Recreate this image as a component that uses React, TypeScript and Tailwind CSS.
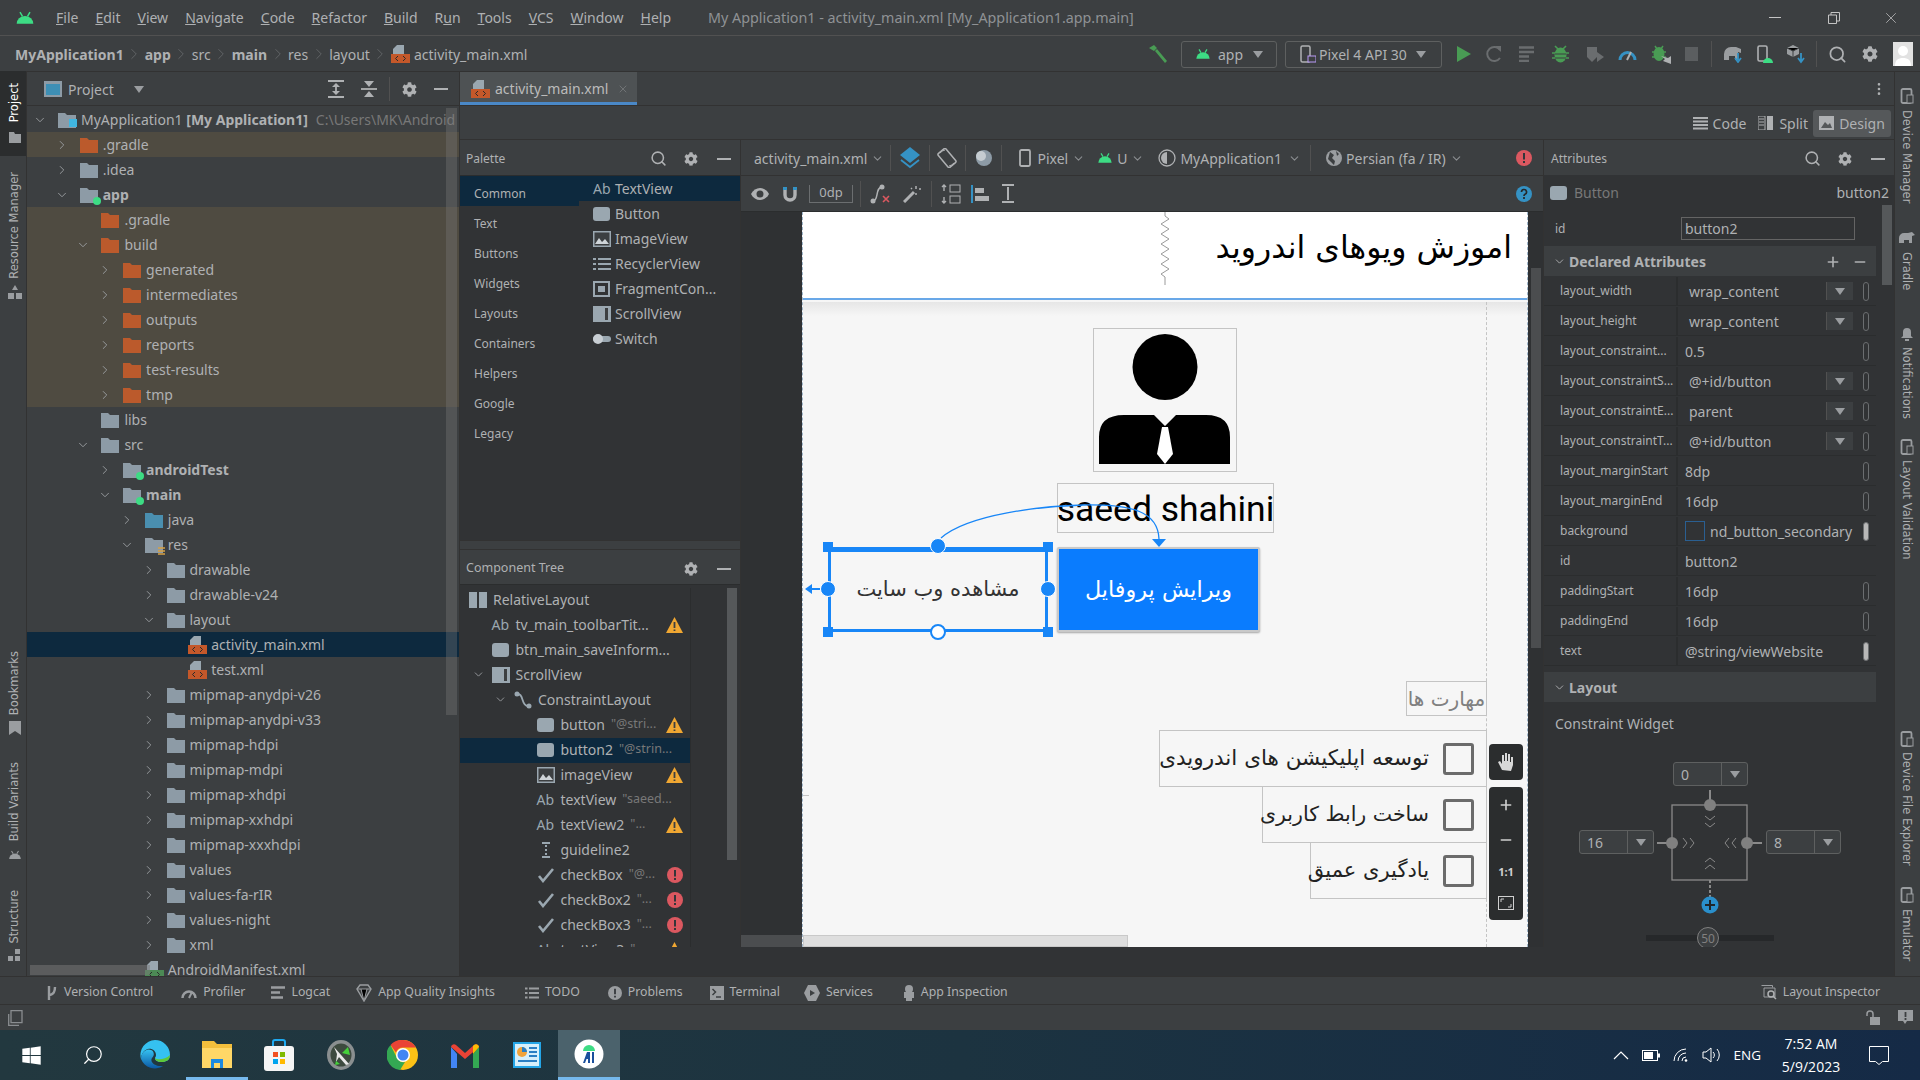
import { ChevronDown, ChevronRight, Minus, MoreVertical, Plus, Search, X } from 'lucide-react'
import type { ReactElement } from 'react'
import { FaCog, FaWindows } from 'react-icons/fa'

const Android = ({ c = '#3ddc84', s = 18 }: { c?: string; s?: number }) => (
  <svg width={s} height={s} viewBox="0 0 24 24">
    <path d="M2 19a10 9.5 0 0 1 20 0z" fill={c} />
    <path d="M6 5l3 5M18 5l-3 5" stroke={c} strokeWidth="1.8" />
  </svg>
)
const Folder = ({ c = '#8d9ba6' }: { c?: string }) => (
  <svg width="18" height="16" viewBox="0 0 18 16" className="shrink-0">
    <path d="M0 1h7l2 2h9v13H0z" fill={c} />
  </svg>
)
const XmlFile = ({ bar = '#c4582a' }: { bar?: string }) => (
  <svg width="19" height="18" viewBox="0 0 19 18" className="shrink-0">
    <path d="M6 0h7v9H2V4z" fill="#9aa7b0" />
    <rect x="0" y="9" width="19" height="9" fill={bar} />
    <path d="M7 11l-2.500 2.500L7 16M12 11l2.500 2.500L12 16" stroke="#2b2b2b" strokeWidth="1" fill="none" />
  </svg>
)
const Tri = ({ c = '#9a9da0', s = 10 }: { c?: string; s?: number }) => (
  <svg width={s} height={s * 0.7} viewBox="0 0 10 7" className="shrink-0">
    <path d="M0 0h10L5 7z" fill={c} />
  </svg>
)
const Warn = () => (
  <svg width="17" height="16" viewBox="0 0 17 16" className="shrink-0">
    <path d="M8.500 0L17 16H0z" fill="#f0a732" />
    <path d="M8.500 5v6M8.500 12.500v1.500" stroke="#3c3f41" strokeWidth="1.800" />
  </svg>
)
const Err = ({ c = '#db5860', s = 16 }: { c?: string; s?: number }) => (
  <svg width={s} height={s} viewBox="0 0 16 16" className="shrink-0">
    <circle cx="8" cy="8" r="8" fill={c} />
    <path d="M8 3v6.500M8 11v2" stroke="#33363a" strokeWidth="2" />
  </svg>
)
const Help = () => (
  <svg width="16" height="16" viewBox="0 0 16 16" className="shrink-0">
    <circle cx="8" cy="8" r="8" fill="#3592c4" />
    <path d="M5.500 6a2.500 2.500 0 1 1 3.500 2.300C8.300 8.700 8 9 8 10M8 11v2" stroke="#25282a" strokeWidth="1.700" fill="none" />
  </svg>
)
const BtnIcon = () => <span className="block h-[14px] w-[17px] shrink-0 rounded-[3px] bg-[#9aa7b0]" />
const Pic = () => (
  <svg width="18" height="16" viewBox="0 0 18 16" className="shrink-0">
    <rect width="18" height="16" fill="#9aa7b0" />
    <rect x="1.500" y="1.500" width="15" height="13" fill="#3c3f41" />
    <path d="M2 13l4-6 3 4 3-3 4 5z" fill="#cfd4d8" />
  </svg>
)
const Ab = () => <span className="w-[19px] shrink-0 text-[14px] text-[#9aa7b0]">Ab</span>
const Gear = () => <FaCog size={14} color="#afb1b3" className="shrink-0" />
const Dash = () => <span className="block h-[2px] w-[14px] shrink-0 bg-[#afb1b3]" />

type Node = { n: string; d: number; o?: boolean; c?: boolean; x?: boolean; b?: boolean; k?: string; dot?: boolean; sel?: boolean }

const tree: Node[] = [
  { n: '.gradle', d: 1, c: true, x: true, k: 'orange' },
  { n: '.idea', d: 1, c: true },
  { n: 'app', d: 1, o: true, b: true, dot: true },
  { n: '.gradle', d: 2, x: true, k: 'orange' },
  { n: 'build', d: 2, o: true, x: true, k: 'orange' },
  { n: 'generated', d: 3, c: true, x: true, k: 'orange' },
  { n: 'intermediates', d: 3, c: true, x: true, k: 'orange' },
  { n: 'outputs', d: 3, c: true, x: true, k: 'orange' },
  { n: 'reports', d: 3, c: true, x: true, k: 'orange' },
  { n: 'test-results', d: 3, c: true, x: true, k: 'orange' },
  { n: 'tmp', d: 3, c: true, x: true, k: 'orange' },
  { n: 'libs', d: 2 },
  { n: 'src', d: 2, o: true },
  { n: 'androidTest', d: 3, c: true, b: true, dot: true },
  { n: 'main', d: 3, o: true, b: true, dot: true },
  { n: 'java', d: 4, c: true, k: 'blue' },
  { n: 'res', d: 4, o: true, k: 'res' },
  { n: 'drawable', d: 5, c: true },
  { n: 'drawable-v24', d: 5, c: true },
  { n: 'layout', d: 5, o: true },
  { n: 'activity_main.xml', d: 6, k: 'xml', sel: true },
  { n: 'test.xml', d: 6, k: 'xml' },
  { n: 'mipmap-anydpi-v26', d: 5, c: true },
  { n: 'mipmap-anydpi-v33', d: 5, c: true },
  { n: 'mipmap-hdpi', d: 5, c: true },
  { n: 'mipmap-mdpi', d: 5, c: true },
  { n: 'mipmap-xhdpi', d: 5, c: true },
  { n: 'mipmap-xxhdpi', d: 5, c: true },
  { n: 'mipmap-xxxhdpi', d: 5, c: true },
  { n: 'values', d: 5, c: true },
  { n: 'values-fa-rIR', d: 5, c: true },
  { n: 'values-night', d: 5, c: true },
  { n: 'xml', d: 5, c: true },
  { n: 'AndroidManifest.xml', d: 4, k: 'man' },
]

const TreeRow = ({ node }: { node: Node }) => (
  <div
    className={`relative flex h-[25px] items-center ${node.sel ? 'bg-[#0d293e]' : node.x ? 'bg-[#4f4b41]' : ''}`}
    style={{ paddingLeft: 6 + node.d * 21.7 }}
  >
    <span className="flex w-[25px] shrink-0 items-center">
      {node.c && <ChevronRight size={14} strokeWidth={1.6} color="#9a9da0" />}
      {node.o && <ChevronDown size={14} strokeWidth={1.6} color="#9a9da0" />}
    </span>
    <span className="relative mr-[5px] flex w-[18px] shrink-0">
      {node.k === 'xml' ? (
        <XmlFile />
      ) : node.k === 'man' ? (
        <XmlFile bar="#4c8a55" />
      ) : (
        <Folder c={node.k === 'orange' ? '#bb5a2c' : node.k === 'blue' ? '#4a8fb0' : '#8d9ba6'} />
      )}
      {node.dot && <span className="absolute right-[-3px] bottom-[-2px] h-[8px] w-[8px] rounded-full bg-[#3ddc84]" />}
      {node.k === 'res' && (
        <svg width="7" height="8" viewBox="0 0 7 8" className="absolute right-[-2px] bottom-[-2px]">
          <path d="M0 1h7M0 4h7M0 7h7" stroke="#d9a343" strokeWidth="1.600" />
        </svg>
      )}
    </span>
    <span className={`whitespace-nowrap ${node.b ? 'font-bold' : ''}`}>{node.n}</span>
  </div>
)

const VLeft = ({ t, active }: { t: string; active?: boolean }) => (
  <span className={`rotate-180 font-['DejaVu_Sans',sans-serif] text-[11.500px] whitespace-nowrap [writing-mode:vertical-rl] ${active ? 'text-white' : 'text-[#afb1b3]'}`}>
    {t}
  </span>
)
const VRight = ({ t }: { t: string }) => (
  <span className="font-['DejaVu_Sans',sans-serif] text-[11.500px] whitespace-nowrap text-[#afb1b3] [writing-mode:vertical-rl]">{t}</span>
)
const StripeGlyph = () => (
  <svg width="14" height="14" viewBox="0 0 14 14">
    <path d="M1 2h5l1 2h6v9H1z" fill="#9a9da0" />
  </svg>
)
const DevGlyph = () => (
  <svg width="14" height="16" viewBox="0 0 14 16">
    <rect x="1.500" y="1" width="10" height="14" rx="1.500" fill="none" stroke="#9a9da0" strokeWidth="1.800" />
    <rect x="7" y="7" width="6" height="8" fill="#3c3f41" stroke="#9a9da0" />
  </svg>
)

const Sep = ({ cls }: { cls: string }) => <span className={`h-[26px] w-px shrink-0 bg-[#515151] ${cls}`} />
const Crumb = () => <ChevronRight size={18} strokeWidth={1} color="#6b6e70" className="mx-[1.500px] shrink-0" />

const cats = ['Common', 'Text', 'Buttons', 'Widgets', 'Layouts', 'Containers', 'Helpers', 'Google', 'Legacy']

const attrs: { l: string; v: string; drop?: boolean; ind?: boolean; pill?: boolean; swatch?: boolean; none?: boolean }[] = [
  { l: 'layout_width', v: 'wrap_content', drop: true, ind: true },
  { l: 'layout_height', v: 'wrap_content', drop: true, ind: true },
  { l: 'layout_constraint...', v: '0.5' },
  { l: 'layout_constraintS...', v: '@+id/button', drop: true, ind: true },
  { l: 'layout_constraintE...', v: 'parent', drop: true, ind: true },
  { l: 'layout_constraintT...', v: '@+id/button', drop: true, ind: true },
  { l: 'layout_marginStart', v: '8dp' },
  { l: 'layout_marginEnd', v: '16dp' },
  { l: 'background', v: 'nd_button_secondary', pill: true, swatch: true },
  { l: 'id', v: 'button2', none: true },
  { l: 'paddingStart', v: '16dp' },
  { l: 'paddingEnd', v: '16dp' },
  { l: 'text', v: '@string/viewWebsite', pill: true },
]

const compTree: { n: string; d: number; hint?: string; st?: 'w' | 'e'; sel?: boolean; ch?: boolean; ic: string }[] = [
  { n: 'RelativeLayout', d: 0, ic: 'rel' },
  { n: 'tv_main_toolbarTit...', d: 1, st: 'w', ic: 'ab' },
  { n: 'btn_main_saveInform...', d: 1, ic: 'btn' },
  { n: 'ScrollView', d: 1, ch: true, ic: 'scroll' },
  { n: 'ConstraintLayout', d: 2, ch: true, ic: 'con' },
  { n: 'button', d: 3, hint: '"@stri...', st: 'w', ic: 'btn' },
  { n: 'button2', d: 3, hint: '"@strin...', sel: true, ic: 'btn' },
  { n: 'imageView', d: 3, st: 'w', ic: 'pic' },
  { n: 'textView', d: 3, hint: '"saeed...', ic: 'ab' },
  { n: 'textView2', d: 3, hint: '"...', st: 'w', ic: 'ab' },
  { n: 'guideline2', d: 3, ic: 'guide' },
  { n: 'checkBox', d: 3, hint: '"@...', st: 'e', ic: 'chk' },
  { n: 'checkBox2', d: 3, hint: '"...', st: 'e', ic: 'chk' },
  { n: 'checkBox3', d: 3, hint: '"...', st: 'e', ic: 'chk' },
  { n: 'textView3', d: 3, hint: '"...', st: 'w', ic: 'ab' },
]

const CompIcon = ({ k }: { k: string }) => {
  if (k === 'ab') return <Ab />
  if (k === 'btn') return <BtnIcon />
  if (k === 'pic') return <Pic />
  if (k === 'rel')
    return (
      <svg width="18" height="16" viewBox="0 0 18 16" className="shrink-0">
        <path d="M0 0h8v16H0zM10 0h8v16h-8z" fill="#9aa7b0" />
      </svg>
    )
  if (k === 'scroll')
    return (
      <svg width="18" height="16" viewBox="0 0 18 16" className="shrink-0">
        <path d="M0 0h18v16H0z" fill="#9aa7b0" />
        <path d="M12 2h3v12h-3z" fill="#3c3f41" />
      </svg>
    )
  if (k === 'con')
    return (
      <svg width="18" height="18" viewBox="0 0 18 18" className="shrink-0">
        <path d="M4 3c6 0 3 12 10 12" stroke="#9aa7b0" strokeWidth="1.800" fill="none" />
        <circle cx="3" cy="3" r="2.500" fill="#9aa7b0" />
        <circle cx="15" cy="15" r="2.500" fill="#9aa7b0" />
      </svg>
    )
  if (k === 'guide')
    return (
      <svg width="18" height="16" viewBox="0 0 18 16" className="shrink-0">
        <path d="M5 1h8M5 15h8" stroke="#9aa7b0" strokeWidth="2" />
        <path d="M9 3v10" stroke="#9aa7b0" strokeWidth="2" strokeDasharray="2 2" />
      </svg>
    )
  return (
    <svg width="18" height="16" viewBox="0 0 18 16" className="shrink-0">
      <path d="M2 9l4 5L16 2" stroke="#9aa7b0" strokeWidth="2.600" fill="none" />
    </svg>
  )
}

const Arabic = ({ t, cls }: { t: string; cls: string }) => (
  <span dir="rtl" className={`font-['DejaVu_Sans',sans-serif] whitespace-nowrap ${cls}`}>
    {t}
  </span>
)

const Handle = ({ cls }: { cls: string }) => <span className={`absolute h-[10px] w-[10px] bg-[#1886f7] ${cls}`} />
const Anchor = ({ cls }: { cls: string }) => <span className={`absolute h-[16px] w-[16px] rounded-full border border-white bg-[#1886f7] ${cls}`} />

const Phone = () => (
  <div className="absolute top-0 left-[61px] h-[735px] w-[726px] overflow-hidden border-x border-dashed border-[#9db4c8] bg-[#f6f6f6]">
    <div className="absolute inset-x-0 top-0 h-[88px] border-b-2 border-[#69a8e8] bg-white">
      <Arabic t="اموزش ویوهای اندروید" cls="absolute top-[10px] right-[15px] text-[31.500px] leading-[50px] text-black" />
      <svg width="10" height="76" viewBox="0 0 10 76" className="absolute top-0 left-[357px]">
        <path d="M5 0v4l4 3-8 5 8 5-8 5 8 5-8 5 8 5-8 5 8 5-8 5 8 5-8 5 4 3v8" stroke="#9a9a9a" fill="none" />
      </svg>
    </div>
    <div className="absolute inset-x-0 top-[90px] h-[14px] bg-gradient-to-b from-[#e6e6e6] to-[#f6f6f6]" />
    <div className="absolute top-[90px] bottom-0 left-[683px] border-l border-dashed border-[#c4c4c4]" />
    <div className="absolute top-[583px] left-0 h-px w-[6px] bg-[#c4c4c4]" />

    <div className="absolute top-[116px] left-[290px] h-[144px] w-[144px] border border-[#c4c4c4]">
      <svg width="142" height="142" viewBox="0 0 142 142">
        <ellipse cx="71" cy="38" rx="32.500" ry="33" fill="#000" />
        <path d="M5 135V108Q5 86 30 86H60L71 97L82 86H112Q136 86 136 108V135Z" fill="#000" />
        <path d="M68 98H74L79 125L71 135L63 125Z" fill="#fff" />
      </svg>
    </div>

    <div className="absolute top-[271px] left-[254px] flex h-[50px] w-[217px] items-center justify-center border border-[#c4c4c4] pt-[3px] font-['Roboto',sans-serif] text-[35.500px] whitespace-nowrap text-black">
      saeed shahini
    </div>

    <div className="absolute top-[335px] left-[254px] flex h-[85px] w-[203px] items-center justify-center rounded-[2px] border-2 border-[#c9c9c9] bg-[#0a7cfe] shadow-[0_1px_2px_#0005]">
      <Arabic t="ویرایش پروفایل" cls="text-[22.300px] text-white" />
    </div>

    <div className="absolute top-[335px] left-[25px] flex h-[85px] w-[220px] items-center justify-center border-[3px] border-[#1886f7]">
      <Arabic t="مشاهده وب سایت" cls="text-[21px] text-[#333]" />
    </div>
    <span className="absolute top-[338px] left-[30px] h-[2px] w-[210px] bg-[#1886f7]" />
    <Handle cls="top-[330px] left-[20px]" />
    <Handle cls="top-[330px] left-[240px]" />
    <Handle cls="top-[415px] left-[20px]" />
    <Handle cls="top-[415px] left-[240px]" />
    <Anchor cls="top-[326px] left-[127px]" />
    <Anchor cls="top-[369px] left-[17px]" />
    <Anchor cls="top-[369px] left-[237px]" />
    <span className="absolute top-[412px] left-[127px] h-[16px] w-[16px] rounded-full border-2 border-[#1886f7] bg-white" />
    <svg width="726" height="400" viewBox="0 0 726 400" className="pointer-events-none absolute top-0 left-0">
      <path d="M138 326C165 302 240 294 280 293C330 292 355 300 356 327" stroke="#1886f7" fill="none" strokeWidth="1.300" />
      <path d="M349 327H363L356 335Z" fill="#1886f7" />
      <path d="M17 377H8" stroke="#1886f7" strokeWidth="2" />
      <path d="M2 377L9 372V382Z" fill="#1886f7" />
    </svg>

    <div className="absolute top-[469px] left-[603px] flex h-[35px] w-[81px] items-center justify-center border border-[#c4c4c4]">
      <Arabic t="مهارت ها" cls="text-[20px] text-[#808080]" />
    </div>

    {[
      { t: 'توسعه اپلیکیشن های اندرویدی', size: 'text-[21.500px]', top: 'top-[518px]', left: 'left-[356px]', w: 'w-[328px]', h: 'h-[57px]' },
      { t: 'ساخت رابط کاربری', size: 'text-[20.500px]', top: 'top-[574px]', left: 'left-[459px]', w: 'w-[225px]', h: 'h-[57px]' },
      { t: 'یادگیری عمیق', size: 'text-[21px]', top: 'top-[630px]', left: 'left-[507px]', w: 'w-[177px]', h: 'h-[57px]' },
    ].map((r) => (
      <div key={r.t} className={`absolute flex items-center justify-end border border-[#c4c4c4] pr-[12px] ${r.top} ${r.left} ${r.w} ${r.h}`}>
        <Arabic t={r.t} cls={`mr-[14px] text-[#222] ${r.size}`} />
        <span className="h-[32px] w-[31px] shrink-0 rounded-[3px] border-[3px] border-[#6b6b6b]" />
      </div>
    ))}

    <div className="absolute top-[532px] left-[686px] flex h-[36px] w-[34px] items-center justify-center rounded-[4px] bg-[#2b2d2e]">
      <svg width="18" height="20" viewBox="0 0 18 20">
        <path d="M5 18L1 10l2-1 2 3V3h2v6h1V1h2v8h1V2h2v8h1V5h2v8l-2 6z" fill="#d8d8d8" />
      </svg>
    </div>
    <div className="absolute top-[575px] left-[686px] flex h-[133px] w-[34px] flex-col items-center justify-between rounded-[4px] bg-[#2b2d2e] py-[10px] text-[#d0d0d0]">
      <Plus size={16} strokeWidth={2.400} />
      <Minus size={16} strokeWidth={2.400} />
      <span className="text-[11px] leading-none font-bold">1:1</span>
      <svg width="16" height="14" viewBox="0 0 16 14">
        <rect x="0.500" y="0.500" width="15" height="13" fill="none" stroke="#d0d0d0" />
        <path d="M3 6V3h3M13 8v3h-3" stroke="#d0d0d0" fill="none" />
      </svg>
    </div>
    <div className="absolute bottom-0 left-0 h-[12px] w-[325px] border border-[#c9c9c9] bg-[#dedede]" />
  </div>
)

const Widget = () => (
  <div className="relative mt-[18px] ml-[35px] h-[185px] w-[262px] overflow-hidden text-[14px] text-[#afb1b3]">
    <svg width="262" height="185" viewBox="0 0 262 185" className="absolute inset-0">
      <rect x="93" y="43" width="75" height="75" fill="none" stroke="#8a8a8a" strokeWidth="1.300" />
      <path d="M131 28V43M78 81H93M168 81H183" stroke="#8a8a8a" strokeWidth="2" />
      <path d="M131 118V138" stroke="#8a8a8a" strokeWidth="2" strokeDasharray="3 2" />
      <circle cx="131" cy="43" r="6" fill="#808080" />
      <circle cx="93" cy="81" r="6" fill="#808080" />
      <circle cx="168" cy="81" r="6" fill="#808080" />
      <path d="M126 54l5 4 5-4M126 61l5 4 5-4M126 107l5-4 5 4M126 100l5-4 5 4M104 76l4 5-4 5M111 76l4 5-4 5M157 76l-4 5 4 5M150 76l-4 5 4 5" stroke="#8a8a8a" fill="none" />
      <circle cx="131" cy="143" r="8.500" fill="#2a8fcb" />
      <path d="M126 143h10M131 138v10" stroke="#20262a" strokeWidth="2" />
      <rect x="67" y="173" width="128" height="6" fill="#26282a" />
      <circle cx="129" cy="176" r="10.500" fill="#3c3f41" stroke="#808080" />
      <text x="129" y="181" textAnchor="middle" fontSize="12" fill="#808080">50</text>
    </svg>
    {[
      { v: '0', cls: 'top-0 left-[94px]' },
      { v: '16', cls: 'top-[68px] left-0' },
      { v: '8', cls: 'top-[68px] left-[187px]' },
    ].map((b) => (
      <div key={b.v} className={`absolute flex h-[24px] w-[75px] items-center rounded-[3px] border border-[#5e6060] bg-[#3c3f41] ${b.cls}`}>
        <span className="w-[47px] pl-[7px]">{b.v}</span>
        <span className="flex h-full flex-1 items-center justify-center border-l border-[#5e6060]">
          <Tri />
        </span>
      </div>
    ))}
  </div>
)

const Edge = () => (
  <svg width="32" height="32" viewBox="0 0 32 32">
    <defs>
      <linearGradient id="ed" x1="0" y1="0" x2="0" y2="1">
        <stop offset="0" stopColor="#35c1f1" />
        <stop offset="1" stopColor="#0c59a4" />
      </linearGradient>
    </defs>
    <path d="M16 1a15 15 0 0 1 15 15c0 5-4 7-8 7-5 0-7-2-7-4 0-1 1-1 1-3 0-4-4-7-8-6-4 1-7 5-7 10A15 15 0 0 1 16 1z" fill="#35c1f1" />
    <path d="M2 20c0-7 6-11 10-9 3 1 4 5 1 8-2 3 1 7 7 8 2 0 3 0 4 0a15 15 0 0 1-22-7z" fill="url(#ed)" />
    <path d="M31 16c0 5-4 7-8 7-5 0-7-2-7-4 2 2 10 2 15-3z" fill="#5ec838" />
  </svg>
)
const Chrome = () => (
  <svg width="32" height="32" viewBox="0 0 32 32">
    <circle cx="16" cy="16" r="15" fill="#fbc116" />
    <path d="M16 1a15 15 0 0 1 13 7.500H16a7.500 7.500 0 0 0-7 5L3.500 6A15 15 0 0 1 16 1z" fill="#ea4335" />
    <path d="M3.500 6L10 19a7.500 7.500 0 0 0 8 4L13 31A15 15 0 0 1 3.500 6z" fill="#34a853" />
    <circle cx="16" cy="16" r="7" fill="#fff" />
    <circle cx="16" cy="16" r="5.500" fill="#4285f4" />
  </svg>
)

const taskIcons = [
  <FaWindows key="w" size={21} color="#fff" />,
  <Search key="s" size={22} strokeWidth={1.300} color="#fff" className="-scale-x-100" />,
  <Edge key="e" />,
  <svg key="f" width="30" height="28" viewBox="0 0 30 28">
    <path d="M0 1h12l3 3H30v24H0z" fill="#f4bf3c" />
    <path d="M0 8h30v20H0z" fill="#ffd767" />
    <path d="M9 28v-9h12v9h-3v-5h-6v5z" fill="#1d8ae0" />
  </svg>,
  <svg key="st" width="30" height="32" viewBox="0 0 30 32">
    <path d="M9 8V3a2 2 0 0 1 2-2h8a2 2 0 0 1 2 2v5" stroke="#1eaaf1" strokeWidth="2" fill="none" />
    <rect y="7" width="30" height="25" rx="3" fill="#f5f5f5" />
    <path d="M9 13h5v5H9z" fill="#f25022" />
    <path d="M16 13h5v5h-5z" fill="#7fba00" />
    <path d="M9 20h5v5H9z" fill="#00a4ef" />
    <path d="M16 20h5v5h-5z" fill="#ffb900" />
  </svg>,
  <svg key="x" width="30" height="32" viewBox="0 0 30 32">
    <ellipse cx="15" cy="16" rx="14" ry="15" fill="#8a8f90" />
    <ellipse cx="15" cy="16" rx="10.500" ry="11.500" fill="#3d4a3f" />
    <path d="M8 8l15 17-3 1-7-8-3 5 1-8z" fill="#e8e8e8" />
    <path d="M16 14l6-6 2 8zM10 22l4 3-5 1z" fill="#45d13a" />
  </svg>,
  <Chrome key="c" />,
  <svg key="g" width="28" height="26" viewBox="0 0 28 26">
    <path d="M0 5v21h6V12z" fill="#4285f4" />
    <path d="M28 5v21h-6V12z" fill="#34a853" />
    <path d="M0 5a3 3 0 0 1 5-2l9 8 9-8a3 3 0 0 1 5 2l-14 12z" fill="#ea4335" />
    <path d="M22 12l6-7a3 3 0 0 0-5-2l-1 1z" fill="#fbbc04" />
  </svg>,
  <svg key="k" width="28" height="26" viewBox="0 0 28 26">
    <rect width="28" height="26" fill="#24a6e8" />
    <rect x="2" y="2" width="24" height="22" fill="#d6effb" />
    <circle cx="9" cy="10" r="5" fill="#f2a33a" />
    <path d="M9 5a5 5 0 0 1 5 5H9z" fill="#2a7fc4" />
    <path d="M16 6h8M16 10h8M16 14h8M5 19h19" stroke="#2a7fc4" strokeWidth="2" />
  </svg>,
  <svg key="as" width="30" height="30" viewBox="0 0 30 30">
    <circle cx="15" cy="15" r="14.500" fill="#fff" />
    <path d="M9 12a6 6 0 0 1 12 0z" fill="#3ddc84" />
    <path d="M9 24l4-11h3v11h-2v-4h-1.500l-1.500 4zM18 13h2v11h-2z" fill="#1a4f9c" />
  </svg>,
]

const bottomTools: { t: string; ml: string; ic: ReactElement }[] = [
  {
    t: 'Version Control',
    ml: 'ml-[46px]',
    ic: (
      <svg width="12" height="16" viewBox="0 0 12 16">
        <path d="M3 1v14M3 10c5 0 6-4 6-8" stroke="#9a9da0" strokeWidth="2.400" fill="none" />
      </svg>
    ),
  },
  {
    t: 'Profiler',
    ml: 'ml-[28px]',
    ic: (
      <svg width="16" height="14" viewBox="0 0 16 14">
        <path d="M1.500 12a6.500 6.500 0 0 1 13 0" stroke="#9a9da0" strokeWidth="2.500" fill="none" />
        <path d="M8 12l3-6" stroke="#9a9da0" strokeWidth="2" />
      </svg>
    ),
  },
  {
    t: 'Logcat',
    ml: 'ml-[26px]',
    ic: (
      <svg width="14" height="13" viewBox="0 0 14 13">
        <path d="M0 1.500h14M0 6.500h9M0 11.500h12" stroke="#9a9da0" strokeWidth="2.400" />
      </svg>
    ),
  },
  {
    t: 'App Quality Insights',
    ml: 'ml-[26px]',
    ic: (
      <svg width="16" height="18" viewBox="0 0 16 18">
        <path d="M1 5l3-4h8l3 4-7 12z" fill="none" stroke="#9a9da0" strokeWidth="1.400" />
        <path d="M1 5h14M5 5l3 12 3-12" stroke="#9a9da0" />
      </svg>
    ),
  },
  {
    t: 'TODO',
    ml: 'ml-[30px]',
    ic: (
      <svg width="14" height="12" viewBox="0 0 14 12">
        <path d="M0 1.500h2.500M4 1.500h10M0 6h2.500M4 6h10M0 10.500h2.500M4 10.500h10" stroke="#9a9da0" strokeWidth="2" />
      </svg>
    ),
  },
  { t: 'Problems', ml: 'ml-[28px]', ic: <Err c="#9a9da0" s={14} /> },
  {
    t: 'Terminal',
    ml: 'ml-[27px]',
    ic: (
      <svg width="14" height="14" viewBox="0 0 14 14">
        <rect width="14" height="14" fill="#9a9da0" />
        <path d="M2.500 3l3 3-3 3M6 11h5" stroke="#3c3f41" strokeWidth="1.500" fill="none" />
      </svg>
    ),
  },
  {
    t: 'Services',
    ml: 'ml-[24px]',
    ic: (
      <svg width="16" height="16" viewBox="0 0 16 16">
        <path d="M4 0h8l4 8-4 8H4L0 8z" fill="#9a9da0" />
        <path d="M6 5l5 3-5 3z" fill="#3c3f41" />
      </svg>
    ),
  },
  {
    t: 'App Inspection',
    ml: 'ml-[30px]',
    ic: (
      <svg width="12" height="16" viewBox="0 0 12 16">
        <circle cx="6" cy="4" r="4" fill="#9a9da0" />
        <rect x="1" y="7" width="10" height="6" fill="#9a9da0" />
        <rect x="3" y="13" width="6" height="3" fill="#9a9da0" />
      </svg>
    ),
  },
]

export default function App() {
  return (
    <div className="flex h-[1080px] w-[1920px] flex-col overflow-hidden bg-[#3c3f41] font-['Noto_Sans',sans-serif] text-[14px] text-[#afb1b3]">
      {/* title bar */}
      <div className="flex h-[36px] shrink-0 items-center border-b border-[#515151]">
        <span className="ml-[15px] w-[41px]">
          <Android s={20} />
        </span>
        <div className="flex gap-[17px]">
          <span><u>F</u>ile</span>
          <span><u>E</u>dit</span>
          <span><u>V</u>iew</span>
          <span><u>N</u>avigate</span>
          <span><u>C</u>ode</span>
          <span><u>R</u>efactor</span>
          <span><u>B</u>uild</span>
          <span>R<u>u</u>n</span>
          <span><u>T</u>ools</span>
          <span><u>V</u>CS</span>
          <span><u>W</u>indow</span>
          <span><u>H</u>elp</span>
        </div>
        <span className="ml-[37px] text-[14.300px] text-[#8f9295]">My Application1 - activity_main.xml [My_Application1.app.main]</span>
        <div className="ml-auto flex items-center">
          <span className="h-px w-[12px] bg-[#c4c4c4]" />
          <svg width="12" height="12" viewBox="0 0 12 12" className="ml-[47px]">
            <path d="M0.500 3h8v8.500h-8zM3 3V0.500h8.500V9H8.500" fill="none" stroke="#c4c4c4" />
          </svg>
          <X size={18} strokeWidth={1} color="#c4c4c4" className="mr-[20px] ml-[42px]" />
        </div>
      </div>

      {/* breadcrumb and run toolbar */}
      <div className="flex h-[36px] shrink-0 items-center border-b border-[#323232] pt-[1px] pl-[15px]">
        <span className="font-bold">MyApplication1</span>
        <Crumb />
        <span className="font-bold">app</span>
        <Crumb />
        <span>src</span>
        <Crumb />
        <span className="font-bold">main</span>
        <Crumb />
        <span>res</span>
        <Crumb />
        <span>layout</span>
        <Crumb />
        <XmlFile />
        <span className="ml-[4px]">activity_main.xml</span>

        <svg width="20" height="20" viewBox="0 0 20 20" className="ml-auto">
          <path d="M1 4l5-3 3 3-3 3zM7 7l2-2 10 12-2 2z" fill="#499c54" />
        </svg>
        <div className="ml-[13px] flex h-[27px] w-[96px] items-center rounded-[3px] border border-[#5e6060] pl-[13px]">
          <Android s={16} />
          <span className="ml-[7px]">app</span>
          <span className="ml-[10px]"><Tri /></span>
        </div>
        <div className="ml-[8px] flex h-[27px] w-[157px] items-center rounded-[3px] border border-[#5e6060] pl-[14px]">
          <svg width="16" height="18" viewBox="0 0 16 18">
            <rect x="1" y="1" width="9" height="16" rx="1.500" fill="none" stroke="#afb1b3" strokeWidth="1.500" />
            <rect x="8" y="11" width="8" height="6" fill="#3c3f41" stroke="#b99bf8" />
          </svg>
          <span className="ml-[3px]">Pixel 4 API 30</span>
          <span className="ml-[9px]"><Tri /></span>
        </div>
        <svg width="14" height="16" viewBox="0 0 14 16" className="ml-[15px]"><path d="M0 0l14 8-14 8z" fill="#499c54" /></svg>
        <svg width="18" height="18" viewBox="0 0 18 18" className="ml-[14px]">
          <path d="M15 5a7 7 0 1 0 0 8" stroke="#6a6d6f" strokeWidth="2" fill="none" />
          <path d="M10 1h6v6z" fill="#6a6d6f" />
        </svg>
        <svg width="18" height="16" viewBox="0 0 18 16" className="ml-[16px]">
          <path d="M0 1.500h15M0 6h15M0 10.500h10M0 15h10" stroke="#6a6d6f" strokeWidth="2.400" />
        </svg>
        <svg width="17" height="18" viewBox="0 0 17 18" className="ml-[15px]">
          <ellipse cx="8.500" cy="10" rx="6" ry="7.500" fill="#499c54" />
          <path d="M0 8h17M0 13h17M3 1l3 3M14 1l-3 3" stroke="#499c54" strokeWidth="1.600" />
          <path d="M3 9h11M3 13h11" stroke="#3c3f41" />
        </svg>
        <svg width="18" height="18" viewBox="0 0 18 18" className="ml-[17px]">
          <path d="M1 2h10v10l-5 5-5-5z" fill="#6a6d6f" />
          <path d="M11 7l7 5-7 5z" fill="#6a6d6f" />
        </svg>
        <svg width="19" height="14" viewBox="0 0 19 14" className="ml-[14px]">
          <path d="M2 13a7.500 7.500 0 0 1 15 0" stroke="#3592c4" strokeWidth="3" fill="none" />
          <path d="M9 13l4-8" stroke="#afb1b3" strokeWidth="2" />
        </svg>
        <svg width="19" height="19" viewBox="0 0 19 19" className="ml-[15px]">
          <ellipse cx="7" cy="9" rx="5.500" ry="7" fill="#499c54" />
          <path d="M0 7h14M0 12h14M3 1l2 3M11 1l-2 3" stroke="#499c54" strokeWidth="1.500" />
          <path d="M9 11l4 3-2 2 8 3V11l-3 2z" fill="#afb1b3" />
        </svg>
        <span className="ml-[14px] h-[14px] w-[13px] bg-[#5b5e60]" />
        <Sep cls="ml-[13px]" />
        <svg width="20" height="18" viewBox="0 0 20 18" className="ml-[11px]">
          <path d="M1 15V9a7 7 0 0 1 7-7h5l5 2v4l-3-1v8h-3v-4H6v4z" fill="#9a9da0" />
          <path d="M15 8v7M12 13l3 4 3-4" stroke="#3592c4" strokeWidth="1.800" fill="none" />
        </svg>
        <svg width="18" height="19" viewBox="0 0 18 19" className="ml-[13px]">
          <rect x="2" y="1" width="9" height="15" rx="1.500" fill="none" stroke="#afb1b3" strokeWidth="1.600" />
          <path d="M7 18a5 5 0 0 1 10 0z" fill="#3ddc84" />
        </svg>
        <svg width="20" height="19" viewBox="0 0 20 19" className="ml-[12px]">
          <path d="M7 0l6 3v6l-6 3-6-3V3z" fill="#9a9da0" />
          <path d="M1 3l6 3 6-3M7 6v6" stroke="#3c3f41" />
          <path d="M15 8v8M12 13l3 4 3-4" stroke="#3592c4" strokeWidth="1.800" fill="none" />
        </svg>
        <Sep cls="ml-[10px]" />
        <Search size={19} strokeWidth={2.200} className="ml-[11px]" />
        <span className="ml-[15px]"><FaCog size={16} color="#afb1b3" /></span>
        <span className="mr-[7px] ml-[15px] flex h-[24px] w-[20px] items-end justify-center overflow-hidden bg-[#e2e2e2]">
          <svg width="20" height="22" viewBox="0 0 20 22">
            <circle cx="10" cy="7" r="5" fill="#fff" />
            <path d="M2 22c0-6 3-8 8-8s8 2 8 8z" fill="#fff" />
          </svg>
        </span>
      </div>

      <div className="flex min-h-0 flex-1">
        {/* left stripe */}
        <div className="flex w-[27px] shrink-0 flex-col items-center border-r border-[#323232] pb-[14px]">
          <div className="-mt-px flex h-[85px] w-full flex-col items-center gap-[8px] bg-[#2b2d2e] pt-[12px] pl-[3px]">
            <VLeft t="Project" active />
            <StripeGlyph />
          </div>
          <div className="mt-[16px] flex flex-col items-center gap-[6px] pl-[3px]">
            <VLeft t="Resource Manager" />
            <svg width="14" height="14" viewBox="0 0 14 14"><path d="M7 0l3 5H4zM0 14V8h6v6zM8 14V8h6v6z" fill="#9a9da0" /></svg>
          </div>
          <div className="mt-auto flex flex-col items-center gap-[6px] pl-[3px]">
            <VLeft t="Bookmarks" />
            <svg width="12" height="14" viewBox="0 0 12 14"><path d="M0 0h12v14L6 10l-6 4z" fill="#9a9da0" /></svg>
          </div>
          <div className="mt-[27px] flex flex-col items-center gap-[6px] pl-[3px]">
            <VLeft t="Build Variants" />
            <Android c="#9a9da0" s={14} />
          </div>
          <div className="mt-[28px] flex flex-col items-center gap-[6px] pl-[3px]">
            <VLeft t="Structure" />
            <svg width="13" height="13" viewBox="0 0 13 13"><path d="M7 0h5v5H7zM0 7h5v5H0zM7 7h5v5H7z" fill="#9a9da0" /></svg>
          </div>
        </div>

        {/* project panel */}
        <div className="relative flex w-[433px] shrink-0 flex-col border-r border-[#323232]">
          <div className="flex h-[34px] shrink-0 items-center border-b border-[#323232] pt-[1px] pl-[17px]">
            <svg width="18" height="16" viewBox="0 0 18 16">
              <rect width="18" height="16" fill="#8d9ba6" />
              <rect x="2" y="3" width="14" height="11" fill="#3d8fb5" />
            </svg>
            <span className="ml-[6px]">Project</span>
            <span className="ml-[20px]"><Tri s={10} /></span>
            <svg width="16" height="18" viewBox="0 0 16 18" className="ml-[184px]">
              <path d="M0 1h16M0 17h16M8 4v10" stroke="#afb1b3" strokeWidth="1.800" />
              <path d="M4 7l4-4 4 4zM4 11l4 4 4-4z" fill="#afb1b3" />
            </svg>
            <svg width="16" height="18" viewBox="0 0 16 18" className="ml-[17px]">
              <path d="M0 9h16" stroke="#afb1b3" strokeWidth="1.800" />
              <path d="M3 1h10L8 7zM3 17h10L8 11z" fill="#afb1b3" />
            </svg>
            <span className="ml-[12px] h-[24px] w-px bg-[#515151]" />
            <span className="ml-[12px]"><FaCog size={15} color="#afb1b3" /></span>
            <span className="ml-[17px]"><Dash /></span>
          </div>
          <div className="relative min-h-0 flex-1 overflow-hidden pt-[1px]">
            <div className="flex h-[25px] items-center pl-[6px] whitespace-nowrap">
              <span className="flex w-[25px] shrink-0"><ChevronDown size={14} strokeWidth={1.600} color="#9a9da0" /></span>
              <span className="relative mr-[5px] w-[18px] shrink-0">
                <Folder />
                <span className="absolute right-[-1px] bottom-[1px] h-[8px] w-[8px] bg-[#40b6e0]" />
              </span>
              <span>MyApplication1 <b>[My Application1]</b></span>
              <span className="ml-[8px] text-[#787878]">C:\Users\MK\Android</span>
            </div>
            {tree.map((node, i) => (
              <TreeRow key={i} node={node} />
            ))}
            <div className="absolute top-[2px] right-[2px] h-[607px] w-[11px] bg-[#7a7a7a]/35" />
            <div className="absolute bottom-[1px] left-[3px] h-[10px] w-[120px] bg-[#7a7a7a]/50" />
          </div>
        </div>

        {/* editor */}
        <div className="flex min-w-0 flex-1 flex-col">
          <div className="flex h-[34px] shrink-0 items-center border-b border-[#323232]">
            <div className="flex h-full w-[177px] items-center border-b-[3px] border-[#4a88c7] bg-[#4e5254] pt-[3px] pl-[11px]">
              <XmlFile />
              <span className="ml-[5px] whitespace-nowrap text-[#bbbbbb]">activity_main.xml</span>
              <X size={12} color="#707375" className="ml-[9px]" />
            </div>
            <MoreVertical size={16} className="mr-[7px] ml-auto" />
          </div>
          <div className="flex h-[34px] shrink-0 items-center justify-end border-b border-[#323232] pt-[1px] pr-[3px]">
            <svg width="15" height="13" viewBox="0 0 15 13"><path d="M0 1h15M0 4.500h15M0 8h15M0 11.500h15" stroke="#afb1b3" strokeWidth="1.800" /></svg>
            <span className="ml-[5px]">Code</span>
            <svg width="15" height="14" viewBox="0 0 15 14" className="ml-[12px]"><path d="M0 0h7v14H0z" fill="#3c3f41" stroke="#afb1b3" /><path d="M9 0h6v14H9z" fill="#afb1b3" /><path d="M1 3h5M1 6h5M1 9h5" stroke="#afb1b3" /></svg>
            <span className="ml-[6px]">Split</span>
            <div className="ml-[5px] flex h-[27px] w-[78px] items-center justify-center gap-[5px] rounded-[3px] bg-[#55585a]">
              <svg width="15" height="14" viewBox="0 0 15 14"><rect width="15" height="14" fill="#afb1b3" /><path d="M2 12l4-6 3 3 2-2 2 5z" fill="#55585a" /></svg>
              <span>Design</span>
            </div>
          </div>

          <div className="flex h-[807px] shrink-0">
            {/* palette and component tree */}
            <div className="flex w-[281px] shrink-0 flex-col border-r border-[#323232] text-[12px]">
              <div className="flex h-[35px] shrink-0 items-center pt-[2px] pr-[9px] pl-[6px]">
                <span className="mr-auto">Palette</span>
                <Search size={17} strokeWidth={2.200} className="shrink-0" />
                <span className="ml-[17px]"><Gear /></span>
                <span className="ml-[19px]"><Dash /></span>
              </div>
              <div className="flex h-[365px] shrink-0 border-t border-[#2b2d2e] bg-[#313335]">
                <div className="w-[119px] shrink-0">
                  {cats.map((c, i) => (
                    <div key={c} className={`flex h-[30px] items-center pt-[5px] pl-[14px] ${i === 0 ? 'bg-[#0d293e]' : ''}`}>{c}</div>
                  ))}
                </div>
                <div className="flex-1 text-[14px]">
                  {[
                    { t: 'TextView', ic: <Ab /> },
                    { t: 'Button', ic: <BtnIcon /> },
                    { t: 'ImageView', ic: <Pic /> },
                    { t: 'RecyclerView', ic: <svg width="18" height="14" viewBox="0 0 18 14" className="shrink-0"><path d="M0 2h3M5 2h13M0 7h3M5 7h13M0 12h3M5 12h13" stroke="#9aa7b0" strokeWidth="2.200" /></svg> },
                    { t: 'FragmentCon...', ic: <svg width="17" height="16" viewBox="0 0 17 16" className="shrink-0"><rect x="1" y="1" width="15" height="14" fill="none" stroke="#9aa7b0" strokeWidth="2" /><rect x="5" y="5" width="7" height="6" fill="#9aa7b0" /></svg> },
                    { t: 'ScrollView', ic: <CompIcon k="scroll" /> },
                    { t: 'Switch', ic: <svg width="18" height="12" viewBox="0 0 18 12" className="shrink-0"><rect y="3" width="18" height="6" rx="3" fill="#9aa7b0" /><circle cx="5" cy="6" r="5" fill="#c8ced3" /></svg> },
                  ].map((it, i) => (
                    <div key={it.t} className={`flex h-[25px] items-center pl-[14px] whitespace-nowrap ${i === 0 ? 'bg-[#0d293e]' : ''}`}>
                      <span className="flex w-[22px] shrink-0">{it.ic}</span>
                      <span>{it.t}</span>
                    </div>
                  ))}
                </div>
              </div>
              <div className="h-[10px] shrink-0 border-y border-[#323232]" />
              <div className="flex h-[34px] shrink-0 items-center pt-[3px] pr-[9px] pl-[6px] text-[12.500px]">
                <span className="mr-auto">Component Tree</span>
                <Gear />
                <span className="ml-[19px]"><Dash /></span>
              </div>
              <div className="relative flex min-h-0 flex-1 overflow-hidden border-t border-[#2b2d2e] bg-[#313335] pt-[3px] text-[14px]">
                <div className="w-[231px] shrink-0 border-r border-[#2b2d2e]">
                  {compTree.map((r) => (
                    <div key={r.n} className={`flex h-[25px] items-center pb-[2px] whitespace-nowrap ${r.sel ? 'bg-[#0d293e]' : ''}`} style={{ paddingLeft: 9 + r.d * 22.500 }}>
                      {r.ch && <ChevronDown size={13} strokeWidth={1.700} color="#9a9da0" className="-ml-[20px] mr-[7px]" />}
                      <span className="flex w-[24px] shrink-0 items-center"><CompIcon k={r.ic} /></span>
                      <span>{r.n}</span>
                      {r.hint && <span className="ml-[6px] text-[12.500px] text-[#787878]">{r.hint}</span>}
                      {r.st && (
                        <span className="mr-[7px] ml-auto">{r.st === 'w' ? <Warn /> : <Err />}</span>
                      )}
                    </div>
                  ))}
                </div>
                <div className="absolute top-[3px] right-[3px] h-[272px] w-[10px] bg-[#55585a]" />
              </div>
            </div>

            {/* design surface */}
            <div className="flex w-[803px] shrink-0 flex-col border-r border-[#323232]">
              <div className="flex h-[36px] shrink-0 items-center border-b border-[#323232] pt-[1px] pl-[13px]">
                <span>activity_main.xml</span>
                <ChevronDown size={13} className="ml-[4px]" color="#8a8d90" />
                <Sep cls="ml-[6px]" />
                <svg width="20" height="22" viewBox="0 0 20 22" className="ml-[9px]">
                  <path d="M10 0l10 8-10 8L0 8z" fill="#3592c4" />
                  <path d="M1 13l9 7 9-7" stroke="#3592c4" strokeWidth="1.800" fill="none" />
                </svg>
                <Sep cls="ml-[9px]" />
                <svg width="20" height="20" viewBox="0 0 20 20" className="ml-[7px]">
                  <g transform="rotate(-40 10 10)"><rect x="5" y="1" width="10" height="18" rx="1.500" fill="none" stroke="#afb1b3" strokeWidth="1.500" /></g>
                  <path d="M3 5a9 9 0 0 1 5-3M17 15a9 9 0 0 1-5 3" stroke="#afb1b3" fill="none" />
                </svg>
                <Sep cls="ml-[8px]" />
                <svg width="18" height="18" viewBox="0 0 18 18" className="ml-[9px]">
                  <circle cx="9" cy="9" r="8" fill="#8d9ba6" />
                  <circle cx="6" cy="7" r="5" fill="#c5ccd1" />
                </svg>
                <Sep cls="ml-[8px]" />
                <svg width="12" height="18" viewBox="0 0 12 18" className="ml-[17px]">
                  <rect x="1" y="1" width="10" height="16" rx="1.500" fill="none" stroke="#afb1b3" strokeWidth="1.800" />
                </svg>
                <span className="ml-[6px]">Pixel</span>
                <ChevronDown size={13} className="ml-[4px]" color="#8a8d90" />
                <span className="ml-[12px]"><Android s={16} /></span>
                <span className="ml-[4px]">U</span>
                <ChevronDown size={13} className="ml-[4px]" color="#8a8d90" />
                <svg width="18" height="18" viewBox="0 0 18 18" className="ml-[14px]">
                  <circle cx="9" cy="9" r="8" fill="none" stroke="#afb1b3" strokeWidth="1.300" />
                  <path d="M9 3a6 6 0 0 0 0 12z" fill="#afb1b3" />
                </svg>
                <span className="ml-[4px]">MyApplication1</span>
                <ChevronDown size={13} className="ml-[6px]" color="#8a8d90" />
                <Sep cls="ml-[9px]" />
                <svg width="18" height="18" viewBox="0 0 18 18" className="ml-[14px]">
                  <circle cx="9" cy="9" r="8" fill="#9a9da0" />
                  <path d="M5 3l4 3-2 3 3 3-1 4-3-3-3-3zM11 2l3 3-2 2z" fill="#3c3f41" />
                </svg>
                <span className="ml-[3px] whitespace-nowrap">Persian (fa / IR)</span>
                <ChevronDown size={13} className="ml-[4px]" color="#8a8d90" />
                <span className="mr-[11px] ml-auto"><Err /></span>
              </div>
              <div className="flex h-[36px] shrink-0 items-center border-b border-[#2b2d2e] pl-[9px]">
                <svg width="20" height="14" viewBox="0 0 20 14"><path d="M1 7c4-8 14-8 18 0-4 8-14 8-18 0z" fill="#afb1b3" /><circle cx="10" cy="7" r="3.500" fill="#3c3f41" /></svg>
                <svg width="16" height="16" viewBox="0 0 16 16" className="ml-[12px]">
                  <path d="M3 1v8a5 5 0 0 0 10 0V1" stroke="#afb1b3" strokeWidth="3.400" fill="none" />
                  <path d="M1 1h4v3H1zM11 1h4v3h-4z" fill="#3592c4" />
                </svg>
                <div className="ml-[11px] flex h-[18px] w-[44px] items-start justify-center border-x border-b border-[#6b6e70] text-[13px] leading-[14px]">0dp</div>
                <Sep cls="ml-[7px]" />
                <svg width="20" height="20" viewBox="0 0 20 20" className="ml-[9px]">
                  <path d="M3 17c6 0 2-14 9-14" stroke="#afb1b3" strokeWidth="1.500" fill="none" />
                  <circle cx="3" cy="17" r="2.500" fill="#afb1b3" /><circle cx="12" cy="3" r="2.500" fill="#afb1b3" />
                  <path d="M13 12l6 6M19 12l-6 6" stroke="#db5860" strokeWidth="1.600" />
                </svg>
                <svg width="18" height="18" viewBox="0 0 18 18" className="ml-[13px]">
                  <path d="M1 17L11 7" stroke="#afb1b3" strokeWidth="3" />
                  <path d="M13 1v3M16 4h2M13 8v2M8 3l1 1" stroke="#afb1b3" strokeWidth="1.500" />
                </svg>
                <Sep cls="ml-[10px]" />
                <svg width="20" height="20" viewBox="0 0 20 20" className="ml-[9px]">
                  <path d="M3 1v6M1 3l2-2 2 2M3 19v-6M1 17l2 2 2-2" stroke="#afb1b3" fill="none" strokeWidth="1.400" />
                  <rect x="9" y="1" width="10" height="7" fill="none" stroke="#afb1b3" /><rect x="9" y="12" width="10" height="7" fill="none" stroke="#afb1b3" />
                </svg>
                <svg width="19" height="20" viewBox="0 0 19 20" className="ml-[10px]">
                  <path d="M1 1v18" stroke="#3592c4" strokeWidth="2" />
                  <path d="M4 4h9v5H4zM4 12h14v5H4z" fill="#afb1b3" />
                </svg>
                <svg width="14" height="20" viewBox="0 0 14 20" className="ml-[11px]">
                  <path d="M1 1h12M1 18h12M7 3v13" stroke="#afb1b3" strokeWidth="2" />
                </svg>
                <span className="mr-[11px] ml-auto"><Help /></span>
              </div>
              <div className="relative min-h-0 flex-1 overflow-hidden bg-[#2f3133]">
                <Phone />
                <div className="absolute top-[56px] right-[2px] h-[380px] w-[10px] bg-[#4b4d4f]" />
                <div className="absolute bottom-0 left-0 h-[12px] w-[61px] bg-[#4b4d4f]" />
              </div>
            </div>

            {/* attributes */}
            <div className="relative flex min-w-0 flex-1 flex-col bg-[#313335]">
              <div className="flex h-[35px] shrink-0 items-center bg-[#3c3f41] pt-[2px] pr-[9px] pl-[7px] text-[12px]">
                <span className="mr-auto">Attributes</span>
                <Search size={17} strokeWidth={2.200} className="shrink-0" />
                <span className="ml-[17px]"><Gear /></span>
                <span className="ml-[19px]"><Dash /></span>
              </div>
              <div className="flex h-[36px] shrink-0 items-center pr-[5px] pb-[1px] pl-[6px]">
                <BtnIcon />
                <span className="ml-[7px] text-[#787878]">Button</span>
                <span className="ml-auto">button2</span>
              </div>
              <div className="flex h-[35px] shrink-0 items-center pl-[11px]">
                <span className="w-[126px] text-[12px]">id</span>
                <div className="flex h-[23px] w-[174px] items-center border border-[#646464] pl-[3px]">button2</div>
              </div>
              <div className="flex h-[30px] w-[332px] shrink-0 items-center bg-[#3c3f41] pt-[1px] pr-[8px] pl-[9px] font-bold">
                <ChevronDown size={13} strokeWidth={1.700} />
                <span className="mr-auto ml-[3px]">Declared Attributes</span>
                <Plus size={16} strokeWidth={2.400} />
                <Minus size={16} strokeWidth={2.400} className="ml-[11px]" />
              </div>
              {attrs.map((a) => (
                <div key={a.l} className="flex h-[30px] w-[332px] shrink-0 items-center border-b border-[#2b2d2e] pt-[1px]">
                  <span className="flex h-full w-[134px] shrink-0 items-center border-r-2 border-[#2b2d2e] pl-[16px] text-[12px] whitespace-nowrap">{a.l}</span>
                  <span className={`flex items-center whitespace-nowrap ${a.ind ? 'ml-[11px]' : 'ml-[7px]'}`}>
                    {a.swatch && <span className="mr-[5px] h-[20px] w-[20px] border border-[#2a5f91]" />}
                    {a.v}
                  </span>
                  <span className="ml-auto flex items-center pr-[7px]">
                    {a.drop && (
                      <span className="mr-[10px] flex h-[18px] w-[27px] items-center justify-center border-l border-[#515151] bg-[#3c3f41]">
                        <Tri />
                      </span>
                    )}
                    {!a.none && (
                      <span className={`h-[19px] w-[6px] rounded-[3px] border border-[#6b6e70] ${a.pill ? 'bg-[#b8b8b8]' : ''}`} />
                    )}
                  </span>
                </div>
              ))}
              <div className="mt-[6px] flex h-[30px] w-[332px] shrink-0 items-center bg-[#3c3f41] pl-[9px] font-bold">
                <ChevronDown size={13} strokeWidth={1.700} />
                <span className="ml-[3px]">Layout</span>
              </div>
              <div className="flex h-[42px] shrink-0 items-center pl-[11px]">Constraint Widget</div>
              <Widget />
              <div className="absolute top-[65px] right-[2px] h-[80px] w-[10px] bg-[#55585a]" />
            </div>
          </div>
          <div className="min-h-0 flex-1 bg-[#313335]" />
        </div>

        {/* right stripe */}
        <div className="flex w-[26px] shrink-0 flex-col items-center border-l border-[#323232] bg-[#3c3f41] pt-[16px] pr-[2px]">
          <DevGlyph />
          <span className="mt-[6px]"><VRight t="Device Manager" /></span>
          <svg width="16" height="12" viewBox="0 0 16 12" className="mt-[24px]"><path d="M0 11V6a5 5 0 0 1 5-5h4l4-1 3 3-3 1v7h-3V8H5v3z" fill="#9a9da0" /></svg>
          <span className="mt-[8px]"><VRight t="Gradle" /></span>
          <svg width="14" height="13" viewBox="0 0 14 13" className="mt-[32px]"><path d="M7 0a4 4 0 0 1 4 4v4l2 2H1l2-2V4a4 4 0 0 1 4-4zM5 11h4v2H5z" fill="#9a9da0" /></svg>
          <span className="mt-[6px]"><VRight t="Notifications" /></span>
          <span className="mt-[15px]"><DevGlyph /></span>
          <span className="mt-[5px]"><VRight t="Layout Validation" /></span>
          <span className="mt-auto"><DevGlyph /></span>
          <span className="mt-[5px]"><VRight t="Device File Explorer" /></span>
          <span className="mt-[16px]"><DevGlyph /></span>
          <span className="mt-[6px] mb-[10px]"><VRight t="Emulator" /></span>
        </div>
      </div>

      {/* tool window bar */}
      <div className="flex h-[29px] shrink-0 items-center border-y border-[#323232] pt-[4px] text-[12.300px]">
        {bottomTools.map((b) => (
          <div key={b.t} className={`flex items-center gap-[6px] whitespace-nowrap ${b.ml}`}>
            {b.ic}
            <span>{b.t}</span>
          </div>
        ))}
        <div className="mr-[40px] ml-auto flex items-center gap-[6px]">
          <svg width="16" height="15" viewBox="0 0 16 15">
            <path d="M0.500 0.500h11v2M3 3h11v9H3z" fill="none" stroke="#9a9da0" />
            <circle cx="10" cy="9" r="3" fill="none" stroke="#afb1b3" strokeWidth="1.500" />
            <path d="M12 11l3 3" stroke="#afb1b3" strokeWidth="1.500" />
          </svg>
          <span>Layout Inspector</span>
        </div>
      </div>

      {/* status bar */}
      <div className="flex h-[25px] shrink-0 items-center pr-[7px] pl-[8px]">
        <svg width="15" height="16" viewBox="0 0 15 16">
          <path d="M3 0.700h11v12H3zM0.700 4v11.300H11" fill="none" stroke="#8a8d90" strokeWidth="1.300" />
        </svg>
        <svg width="15" height="15" viewBox="0 0 15 15" className="ml-auto">
          <rect x="4" y="7" width="10" height="8" fill="#9a9da0" />
          <path d="M1 6V4a3 3 0 0 1 6 0v3" stroke="#9a9da0" strokeWidth="1.500" fill="none" />
        </svg>
        <svg width="15" height="15" viewBox="0 0 15 15" className="ml-[17px]">
          <path d="M0 0h15v11H9l-2 3-2-3H0z" fill="#9a9da0" />
          <path d="M7.500 2v5M7.500 8v2" stroke="#3c3f41" strokeWidth="1.800" />
        </svg>
      </div>

      {/* taskbar */}
      <div className="flex h-[50px] shrink-0 items-center bg-gradient-to-r from-[#22383f] via-[#1c3340] to-[#152a46] font-['Open_Sans',sans-serif] text-white">
        {taskIcons.map((ic, i) => (
          <div
            key={i}
            className={`flex h-full w-[62px] items-center justify-center ${i === 9 ? 'border-b-[3px] border-[#76b9ed] bg-[#4b626c]' : i === 3 ? 'border-b-[3px] border-[#76b9ed]' : ''}`}
          >
            {ic}
          </div>
        ))}
        <svg width="16" height="9" viewBox="0 0 16 9" className="ml-auto">
          <path d="M1 8l7-7 7 7" stroke="#fff" fill="none" strokeWidth="1.200" />
        </svg>
        <svg width="18" height="11" viewBox="0 0 18 11" className="ml-[13px]">
          <rect x="0.500" y="0.500" width="15" height="10" fill="none" stroke="#fff" />
          <rect x="2" y="2" width="9" height="7" fill="#fff" />
          <rect x="16" y="3.500" width="2" height="4" fill="#fff" />
        </svg>
        <svg width="16" height="14" viewBox="0 0 16 14" className="ml-[13px]">
          <path d="M1 13A12 12 0 0 1 13 1M5 13a8 8 0 0 1 8-8M9 13a4 4 0 0 1 4-4" stroke="#fff" fill="none" />
          <circle cx="13" cy="12.500" r="1.300" fill="#fff" />
        </svg>
        <svg width="20" height="16" viewBox="0 0 20 16" className="ml-[13px]">
          <path d="M1 5h3l5-4v14l-5-4H1z" fill="none" stroke="#fff" />
          <path d="M11 5a4 4 0 0 1 0 6M15 2a9 9 0 0 1 0 12" stroke="#fff" fill="none" />
        </svg>
        <span className="ml-[12px] text-[13.500px]">ENG</span>
        <div className="ml-[16px] flex w-[68px] flex-col items-center text-[14px] leading-[23px]">
          <span>7:52 AM</span>
          <span>5/9/2023</span>
        </div>
        <svg width="20" height="19" viewBox="0 0 20 19" className="mr-[31px] ml-[24px]">
          <path d="M0.500 0.500h19v15h-6l-3.500 3-3.500-3h-6z" fill="none" stroke="#fff" />
        </svg>
      </div>
    </div>
  )
}
